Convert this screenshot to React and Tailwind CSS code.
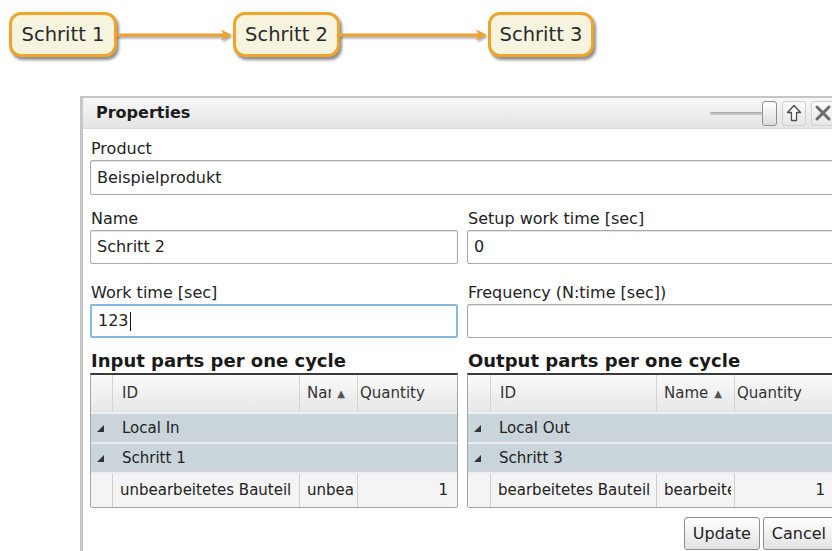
import React from "react";

const ORANGE = "#eea12e";

function StepNode({ label, w }) {
  return (
    <div
      className="h-[45px] shrink-0 rounded-[12px] border-[3px] border-[#f0a52a] bg-[#f6f3df] shadow-[2px_3px_3px_rgba(0,0,0,0.45)] flex items-center justify-center text-[19.5px] text-[#2a2a2a]"
      style={{ width: w }}
    >
      {label}
    </div>
  );
}

function Connector({ w }) {
  return (
    <svg
      width={w}
      height="16"
      className="shrink-0 drop-shadow-[1px_2px_1px_rgba(0,0,0,0.35)]"
    >
      <line x1="0" y1="8" x2={w - 8} y2="8" stroke={ORANGE} strokeWidth="3" />
      <polygon points={`${w - 12},2.5 ${w - 1},8 ${w - 12},13.5 ${w - 9},8`} fill={ORANGE} />
    </svg>
  );
}

function Field({ label, value, h = "h-[34px]", focused = false, className = "" }) {
  return (
    <div className={`flex flex-col ${className}`}>
      <div className="leading-[19px] text-[16px] text-[#222] pl-[1px] mb-[2px]">{label}</div>
      <div
        className={`${h} rounded-[2px] bg-white flex items-center pl-[6px] text-[16px] text-[#222] ${
          focused
            ? "border-2 border-[#86b8e2] pl-[5px]"
            : "border border-[#a9a9a9] shadow-[inset_0_1px_1px_rgba(0,0,0,0.12)]"
        }`}
      >
        <span>{value}</span>
        {focused && <span className="w-[1.5px] h-[19px] bg-[#111] ml-[1px]" />}
      </div>
    </div>
  );
}

function GroupArrow() {
  return (
    <svg width="7" height="7" viewBox="0 0 7 7">
      <polygon points="7,0 7,7 0,7" fill="#333" />
    </svg>
  );
}

function PartsTable({ title, cols, groups, row }) {
  return (
    <div className="flex flex-col">
      <div className="text-[18px] font-bold leading-[22px] text-[#1a1a1a] pl-[1px] mb-[1px]">{title}</div>
      <div className="border-t-2 border-t-[#3b3b3b] border-x border-b border-[#a4a4a4] rounded-b-[3px] overflow-hidden bg-white">
        {/* column headers */}
        <div
          className="grid h-[39px] bg-[linear-gradient(#fbfbfb,#e6e6e6)] text-[15px] text-[#333] border-b-2 border-[#eef1f2]"
          style={{ gridTemplateColumns: cols }}
        >
          <div className="border-r border-[#d4d4d4]" />
          <div className="border-r border-[#d4d4d4] flex items-center pl-[9px]">ID</div>
          <div className="border-r border-[#d4d4d4] flex items-center pl-[7px] pr-[12px] overflow-hidden">
            <span className="overflow-hidden whitespace-nowrap min-w-0">Name</span>
            <span className="text-[10px] text-[#555] ml-[6px] shrink-0">▲</span>
          </div>
          <div className="flex items-center pl-[2px] whitespace-nowrap overflow-hidden">Quantity</div>
        </div>
        {/* group rows */}
        {groups.map((g) => (
          <div key={g} className="flex items-center h-[30px] bg-[#c9d5db] border-b-2 border-[#e9eef0] text-[15px] text-[#222]">
            <div className="w-[22px] flex justify-end pr-[9px]">
              <GroupArrow />
            </div>
            <div className="pl-[9px]">{g}</div>
          </div>
        ))}
        {/* data row */}
        <div
          className="grid h-[33px] bg-[#f4f4f4] text-[15px] text-[#222]"
          style={{ gridTemplateColumns: cols }}
        >
          <div className="border-r border-[#d0d0d0]" />
          <div className="border-r border-[#d0d0d0] flex items-center pl-[7px] whitespace-nowrap overflow-hidden">{row[0]}</div>
          <div className="border-r border-[#d0d0d0] flex items-center pl-[7px] pr-[3px] whitespace-nowrap overflow-hidden">
            <span className="overflow-hidden">{row[1]}</span>
          </div>
          <div className="flex items-center justify-end pr-[9px]">{row[2]}</div>
        </div>
      </div>
    </div>
  );
}

function HeaderControls() {
  return (
    <div className="flex items-center">
      {/* zoom slider */}
      <div className="flex items-center">
        <div className="w-[52px] h-[3px] rounded-full bg-[#c4c4c4] border-t border-[#a8a8a8]" />
        <div className="w-[15px] h-[25px] rounded-[3px] border border-[#8e8e8e] bg-[linear-gradient(#ffffff,#dcdcdc)]" />
      </div>
      {/* collapse button */}
      <div className="ml-[5px] w-[24px] h-[25px] rounded-[3px] border border-[#d0d0d0] bg-[linear-gradient(#fafafa,#e6e6e6)] flex items-center justify-center">
        <svg width="16" height="18" viewBox="0 0 16 18">
          <path d="M8 1.5 L14.5 8.5 L10.5 8.5 L10.5 16.5 L5.5 16.5 L5.5 8.5 L1.5 8.5 Z" fill="#fff" stroke="#4a4a4a" strokeWidth="1.3" strokeLinejoin="round" />
        </svg>
      </div>
      {/* close button */}
      <div className="ml-[5px] w-[24px] h-[25px] rounded-[3px] border border-[#d0d0d0] bg-[linear-gradient(#fafafa,#e6e6e6)] flex items-center justify-center">
        <svg width="18" height="18" viewBox="0 0 18 18">
          <path d="M3 3 L15 15 M15 3 L3 15" stroke="#6d6d6d" strokeWidth="3" strokeLinecap="round" />
        </svg>
      </div>
    </div>
  );
}

function Button({ children }) {
  return (
    <div className="h-[33px] px-[8px] rounded-[3px] border border-[#8f8f8f] bg-[linear-gradient(#ffffff,#e2e2e2)] flex items-center text-[16px] text-[#222] shadow-[inset_0_1px_0_#fff]">
      {children}
    </div>
  );
}

export default function App() {
  return (
    <div className="w-[832px] h-[551px] overflow-hidden bg-white font-['DejaVu_Sans',sans-serif]">
      {/* process flow */}
      <div className="flex items-center pl-[9px] pt-[12px]">
        <StepNode label="Schritt 1" w={108} />
        <Connector w={116} />
        <StepNode label="Schritt 2" w={107} />
        <Connector w={148} />
        <StepNode label="Schritt 3" w={106} />
      </div>

      {/* properties panel */}
      <div className="mt-[39px] ml-[80px] w-[771px] h-[460px] border-l-[3px] border-t-[2px] border-[#c6c6c6] bg-white flex flex-col">
        <div className="h-[31px] shrink-0 bg-[linear-gradient(#f7f7f7,#e4e4e4)] border-b border-[#dcdcdc] flex items-center pl-[13px] pr-[16px]">
          <div className="flex-1 text-[16px] font-bold text-[#1c1c1c]">Properties</div>
          <HeaderControls />
        </div>

        <div className="px-[7px] flex flex-col">
          <Field label="Product" value="Beispielprodukt" h="h-[35px]" className="mt-[10px]" />

          <div className="grid grid-cols-[368px_368px] gap-x-[9px] mt-[14px]">
            <Field label="Name" value="Schritt 2" />
            <Field label="Setup work time [sec]" value="0" />
          </div>

          <div className="grid grid-cols-[368px_368px] gap-x-[9px] mt-[19px]">
            <Field label="Work time [sec]" value="123" focused />
            <Field label="Frequency (N:time [sec])" value="" />
          </div>

          <div className="grid grid-cols-[368px_368px] gap-x-[9px] mt-[12px]">
            <PartsTable
              title="Input parts per one cycle"
              cols="22px 187px 58px 1fr"
              groups={["Local In", "Schritt 1"]}
              row={["unbearbeitetes Bauteil", "unbearbeitetes Bauteil", "1"]}
            />
            <PartsTable
              title="Output parts per one cycle"
              cols="23px 166px 78px 1fr"
              groups={["Local Out", "Schritt 3"]}
              row={["bearbeitetes Bauteil", "bearbeitetes Bauteil", "1"]}
            />
          </div>

          <div className="flex justify-end gap-[3px] mt-[9px] w-[745px]">
            <Button>Update</Button>
            <Button>Cancel</Button>
          </div>
        </div>
      </div>
    </div>
  );
}
